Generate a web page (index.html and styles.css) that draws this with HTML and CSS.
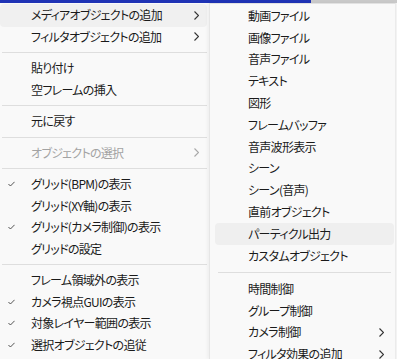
FILE: index.html
```html
<!DOCTYPE html>
<html lang="ja">
<head>
<meta charset="utf-8">
<link rel="stylesheet" href="styles.css">
</head>
<body>
<div class="topbar"><div class="topbar-blue"></div><div class="topbar-gray"></div></div>
<div class="menus">
  <div class="menu main">
    <div class="item hover"><span class="chk"></span><span class="label">メディアオブジェクトの追加</span><svg class="arr" viewBox="0 0 5 9"><polyline points="0.5,0.5 4.5,4.5 0.5,8.5"/></svg></div>
    <div class="item"><span class="chk"></span><span class="label">フィルタオブジェクトの追加</span><svg class="arr" viewBox="0 0 5 9"><polyline points="0.5,0.5 4.5,4.5 0.5,8.5"/></svg></div>
    <div class="sep"></div>
    <div class="item"><span class="chk"></span><span class="label">貼り付け</span></div>
    <div class="item"><span class="chk"></span><span class="label">空フレームの挿入</span></div>
    <div class="sep"></div>
    <div class="item"><span class="chk"></span><span class="label">元に戻す</span></div>
    <div class="sep"></div>
    <div class="item disabled"><span class="chk"></span><span class="label">オブジェクトの選択</span><svg class="arr" viewBox="0 0 5 9"><polyline points="0.5,0.5 4.5,4.5 0.5,8.5"/></svg></div>
    <div class="sep"></div>
    <div class="item"><svg class="chk" viewBox="0 0 8 6"><polyline points="0.5,3 2.8,5.3 7.5,0.5"/></svg><span class="label">グリッド(BPM)の表示</span></div>
    <div class="item"><span class="chk"></span><span class="label">グリッド(XY軸)の表示</span></div>
    <div class="item"><svg class="chk" viewBox="0 0 8 6"><polyline points="0.5,3 2.8,5.3 7.5,0.5"/></svg><span class="label">グリッド(カメラ制御)の表示</span></div>
    <div class="item"><span class="chk"></span><span class="label">グリッドの設定</span></div>
    <div class="sep"></div>
    <div class="item"><span class="chk"></span><span class="label">フレーム領域外の表示</span></div>
    <div class="item"><svg class="chk" viewBox="0 0 8 6"><polyline points="0.5,3 2.8,5.3 7.5,0.5"/></svg><span class="label">カメラ視点GUIの表示</span></div>
    <div class="item"><svg class="chk" viewBox="0 0 8 6"><polyline points="0.5,3 2.8,5.3 7.5,0.5"/></svg><span class="label">対象レイヤー範囲の表示</span></div>
    <div class="item"><svg class="chk" viewBox="0 0 8 6"><polyline points="0.5,3 2.8,5.3 7.5,0.5"/></svg><span class="label">選択オブジェクトの追従</span></div>
  </div>
  <div class="menu sub">
    <div class="item"><span class="label">動画ファイル</span></div>
    <div class="item"><span class="label">画像ファイル</span></div>
    <div class="item"><span class="label">音声ファイル</span></div>
    <div class="item"><span class="label">テキスト</span></div>
    <div class="item"><span class="label">図形</span></div>
    <div class="item"><span class="label">フレームバッファ</span></div>
    <div class="item"><span class="label">音声波形表示</span></div>
    <div class="item"><span class="label">シーン</span></div>
    <div class="item"><span class="label">シーン(音声)</span></div>
    <div class="item"><span class="label">直前オブジェクト</span></div>
    <div class="item hover"><span class="label">パーティクル出力</span></div>
    <div class="item"><span class="label">カスタムオブジェクト</span></div>
    <div class="sep"></div>
    <div class="item"><span class="label">時間制御</span></div>
    <div class="item"><span class="label">グループ制御</span></div>
    <div class="item"><span class="label">カメラ制御</span><svg class="arr" viewBox="0 0 5 9"><polyline points="0.5,0.5 4.5,4.5 0.5,8.5"/></svg></div>
    <div class="item"><span class="label">フィルタ効果の追加</span><svg class="arr" viewBox="0 0 5 9"><polyline points="0.5,0.5 4.5,4.5 0.5,8.5"/></svg></div>
  </div>
</div>
</body>
</html>
```
FILE: styles.css
```css
html, body {
  margin: 0;
  padding: 0;
}
body {
  width: 397px;
  height: 359px;
  overflow: hidden;
  background: #f3f3f3;
  font-family: "Noto Sans CJK JP", "Noto Sans", sans-serif;
  font-size: 12px;
  font-feature-settings: "palt";
  letter-spacing: -0.7px;
  color: #1a1a1a;
}
.topbar {
  display: flex;
  height: 3px;
}
.topbar-blue {
  width: 311px;
  background: #1f33b5;
}
.topbar-gray {
  flex: 1;
  background: #c9c9c9;
}
.menus {
  display: flex;
  height: 356px;
}
.menu {
  background: #f9f9f9;
  box-sizing: border-box;
}
.main {
  width: 209px;
  padding: 1.5px 2px 0 0;
}
.sub {
  width: 187px;
  border-left: 1px solid #e6e6e6;
  border-right: 1px solid #ebebeb;
  border-top: 1px solid #e2e2e2;
  box-shadow: -2px 0 3px rgba(0, 0, 0, 0.04);
  padding: 1px 1px 0 5px;
}
.item {
  height: 21.5px;
  display: flex;
  align-items: center;
  border-radius: 4px;
}
.main .item {
  padding: 0 8px 0 0;
}
.sub .item {
  height: 21.8px;
  padding: 0 10px 0 33px;
}
.item.hover {
  background: #f0f0f0;
}
.main .item.hover {
  height: 23px;
  margin: -0.75px 0 -0.75px;
}
.sub .item.hover {
  background: #efefef;
}
.chk {
  width: 31px;
  flex: none;
  display: block;
}
svg.chk {
  width: 7px;
  height: 6px;
  padding: 0 16px 0 8px;
  fill: none;
  stroke: #3c3c3c;
  stroke-width: 1;
}
.label {
  flex: 1;
  white-space: nowrap;
  line-height: 1;
}
.arr {
  width: 5px;
  height: 9px;
  flex: none;
  fill: none;
  stroke: #333;
  stroke-width: 1.1;
}
.disabled {
  color: #a3a3a3;
}
.disabled .arr {
  stroke: #a8a8a8;
}
.sep {
  height: 10px;
  display: flex;
  align-items: center;
}
.sub .sep {
  height: 11.4px;
}
.sep::before {
  content: "";
  display: block;
  flex: 1;
  height: 1px;
  background: #dedede;
}
.main .sep::before {
  margin: 0 0 0 2px;
}
.sub .sep::before {
  margin: 0 3px 0 3px;
}
```
